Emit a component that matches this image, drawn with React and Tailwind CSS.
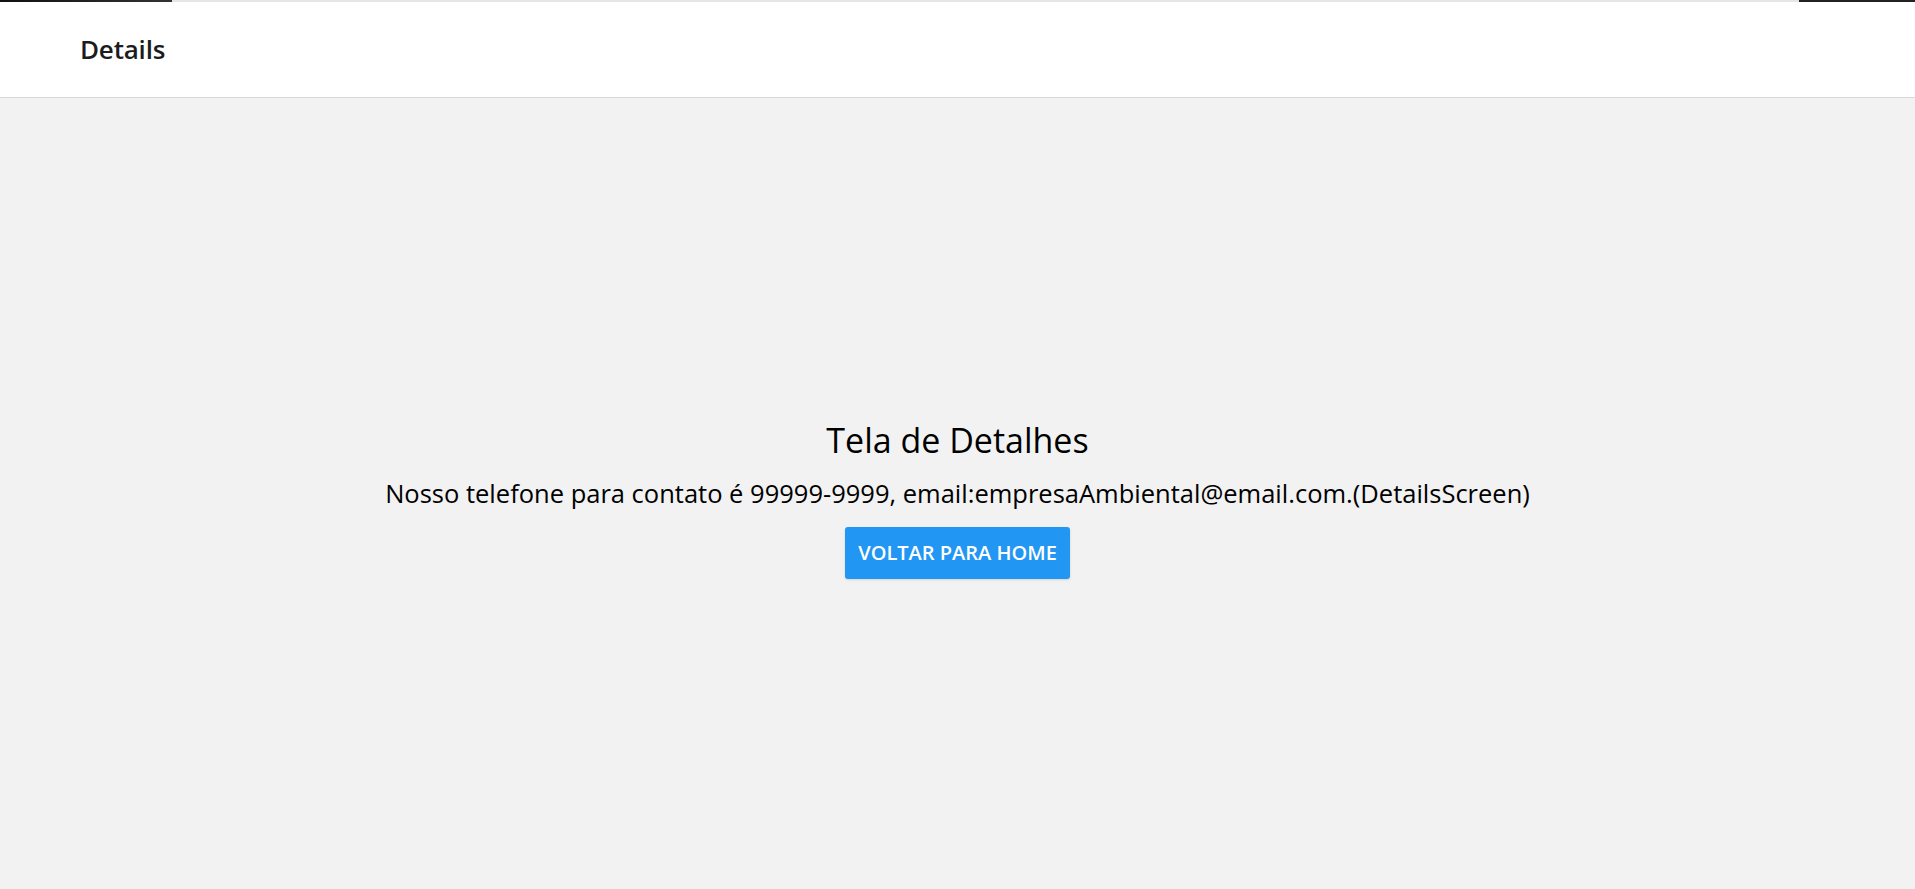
import React from 'react';

const DetailsScreen = () => {
  return (
    <div className="w-full h-screen flex flex-col bg-[#f2f2f2]" style={{ fontFamily: "'Open Sans', 'Noto Sans', sans-serif" }}>
      <div className="flex h-[2px] shrink-0">
        <div className="w-[172px] bg-gradient-to-r from-[#111] to-[#333]" />
        <div className="flex-1 bg-[#e6e6e6]" />
        <div className="w-[116px] bg-[#222]" />
      </div>
      <header className="h-[96px] shrink-0 bg-white border-b border-[#d8d8d8] flex items-center px-[80px]">
        <h1 className="text-[26px] font-semibold text-[#1c1c1e] tracking-[-0.2px]">Details</h1>
      </header>
      <main className="flex-1 flex flex-col items-center justify-center pt-[10px]">
        <h2 className="text-[34px] leading-[44px] text-black">Tela de Detalhes</h2>
        <p className="text-[25.5px] leading-[36px] text-black mt-[13px]">
          Nosso telefone para contato é 99999-9999, email:empresaAmbiental@email.com.(DetailsScreen)
        </p>
        <button className="mt-[16px] h-[52px] px-[13px] bg-[#2196f3] rounded-[3px] text-white text-[20px] font-semibold uppercase shadow-sm">
          Voltar para Home
        </button>
      </main>
    </div>
  );
};

export default DetailsScreen;
